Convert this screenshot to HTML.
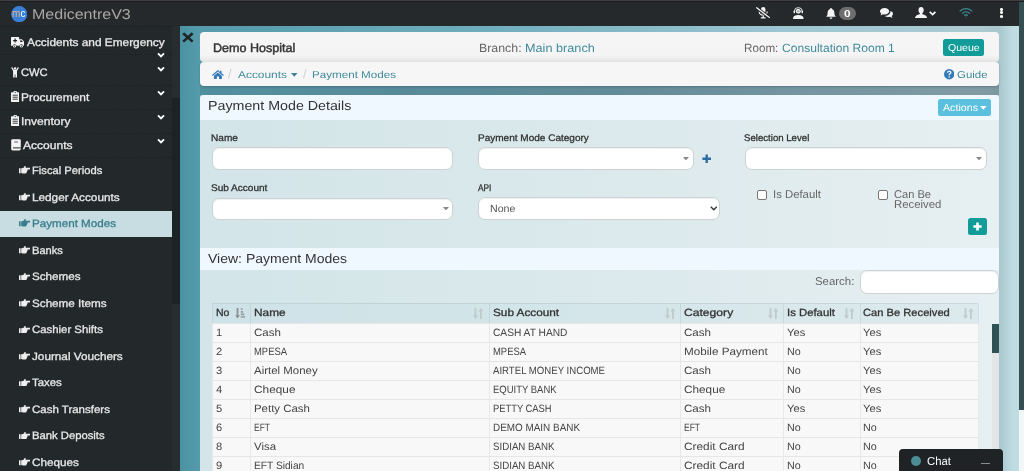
<!DOCTYPE html>
<html><head><meta charset="utf-8"><title>MedicentreV3 - Payment Modes</title>
<style>
*{box-sizing:border-box;margin:0;padding:0}
html,body{width:1024px;height:471px;overflow:hidden}
body{font-family:"Liberation Sans",sans-serif;position:relative;background:#5a9eac;color:#333}
.a,.t,svg{position:absolute}
.t{white-space:nowrap;line-height:1;transform-origin:0 0;display:block;text-rendering:geometricPrecision}
#nav{left:0;top:0;width:1024px;height:25.5px;background:#25292c;border-top:1px solid #3f3f42;box-shadow:inset 0 1px 0 #1c1e20}
#side{left:0;top:25px;width:180px;height:446px;background:#23292b}
#strack{left:172px;top:26px;width:8px;height:445px;background:#272c2f}
#sthumb{left:172px;top:98px;width:8px;height:206px;background:#1b2325}
#main{left:180px;top:25.5px;width:839px;height:446px;background:linear-gradient(90deg,#4a92a2 0,#559bab 20px,#6fadbc 300px,#9cc5d1 600px,#adcbd3 800px,#a8c6cd 819px,#b4d1d8 826px,#c0dce3 833px)}
#ptrack{left:1019px;top:2px;width:5px;height:469px;background:#f3f6f6}
#pthumb{left:1019px;top:2px;width:5px;height:408px;background:#344f52}
.sep{left:0;width:172px;height:1px;background-image:linear-gradient(90deg,#171b1d 50%,transparent 50%);background-size:3px 1px}
#sel{left:0;top:211px;width:172px;height:26px;background:#c7dde2}
.card{background:#f5f5f5;border-radius:4px}
#card1{left:200px;top:32px;width:799px;height:30.2px;background:linear-gradient(#f5f5f5 0,#f5f5f5 76%,#ececec 90%,#e2e2e2 100%)}
#card2{left:200px;top:62.2px;width:799px;height:23.8px;background:#f6f6f6;box-shadow:0 1px 2px rgba(20,40,50,.25)}
.panel{left:200px;width:799px;background:linear-gradient(90deg,#d3e5e9 0,#d9e8eb 40%,#e1ecee 75%,#e6eff1 100%)}
.ph{left:200px;width:799px;background:#f0f8ff}
.inp{background:#fff;border:1px solid #cdd3d4;border-radius:7px;box-shadow:inset 0 1px 1px rgba(0,0,0,.06)}
.btn{border-radius:2px}
.cb{width:10px;height:10px;background:#fff;border:1px solid #767676;border-radius:2px}
.th{top:303.3px;height:19.8px;background:rgba(185,218,226,.22);border-top:1px solid rgba(150,170,175,.28)}
</style></head><body>
<div class="a" id="wrap" style="left:0;top:0;width:1024px;height:471px;will-change:transform">
<div id="nav" class="a"></div>
<div id="side" class="a"></div>
<div id="strack" class="a"></div>
<div id="sthumb" class="a"></div>
<div id="main" class="a"></div>
<div id="ptrack" class="a"></div>
<div id="pthumb" class="a"></div>
<div id="sel" class="a"></div>
<div class="a sep" style="top:26px"></div>
<div class="a sep" style="top:54px"></div>
<div class="a sep" style="top:84.5px"></div>
<div class="a sep" style="top:108.5px"></div>
<div class="a sep" style="top:133px"></div>
<div class="a sep" style="top:157px"></div>
<!-- cards -->
<div class="a" style="left:200px;top:84px;width:799px;height:10.5px;background:linear-gradient(90deg,rgba(50,70,80,.14) 0,rgba(50,70,80,.3) 25%,rgba(50,70,80,.4) 55%,rgba(50,70,80,.36) 100%)"></div>
<div id="card2" class="a card"></div>
<div id="card1" class="a card"></div>
<div class="a btn" style="left:943.3px;top:38.5px;width:41px;height:17px;background:#119c9a;border-radius:2.5px"></div>
<!-- panel 1 -->
<div class="a ph" style="top:94.5px;height:25.5px;border-radius:3px 3px 0 0"></div>
<div class="a panel" style="top:120px;height:127.5px"></div>
<div class="a btn" style="left:937.7px;top:99px;width:53.6px;height:17px;background:#5bc0de;border-radius:2.5px"></div>
<div class="a inp" style="left:212.4px;top:147.2px;width:241px;height:23px"></div>
<div class="a inp" style="left:478.2px;top:146.8px;width:216.3px;height:23px"></div>
<div class="a inp" style="left:745.2px;top:146.8px;width:241.6px;height:23px"></div>
<div class="a inp" style="left:212.4px;top:197.5px;width:241px;height:22px"></div>
<div class="a inp" style="left:478.2px;top:197.3px;width:242px;height:23px"></div>
<div class="a cb" style="left:757px;top:190.2px"></div>
<div class="a cb" style="left:878.2px;top:190.2px"></div>
<div class="a btn" style="left:968.3px;top:218px;width:18.8px;height:17.2px;background:#119c9a;border-radius:2.5px"></div>
<!-- panel 2 -->
<div class="a ph" style="top:247.5px;height:22.5px"></div>
<div class="a panel" style="top:270px;height:201px"></div>
<div class="a inp" style="left:859.5px;top:270.3px;width:139.5px;height:23.5px"></div>
<div class="a" style="left:991.5px;top:323.5px;width:7.5px;height:148px;background:#e3e6e6"></div>
<div class="a" style="left:991.5px;top:323.8px;width:7.5px;height:28.8px;background:#2f5054"></div>
<div class="a th" style="left:212px;width:766px"></div>
<div class="a" style="left:212px;top:323px;width:766px;height:148px;background:#f8f8f8"></div>
<div class="a" style="left:212px;top:323px;width:766px;height:1px;background:#e6e6e6"></div>
<div class="a" style="left:212px;top:342px;width:766px;height:1px;background:#e6e6e6"></div>
<div class="a" style="left:212px;top:361px;width:766px;height:1px;background:#e6e6e6"></div>
<div class="a" style="left:212px;top:380px;width:766px;height:1px;background:#e6e6e6"></div>
<div class="a" style="left:212px;top:399px;width:766px;height:1px;background:#e6e6e6"></div>
<div class="a" style="left:212px;top:418px;width:766px;height:1px;background:#e6e6e6"></div>
<div class="a" style="left:212px;top:437px;width:766px;height:1px;background:#e6e6e6"></div>
<div class="a" style="left:212px;top:456px;width:766px;height:1px;background:#e6e6e6"></div>
<div class="a" style="left:212px;top:304px;width:1px;height:19px;background:rgba(150,170,175,.22)"></div>
<div class="a" style="left:212px;top:323px;width:1px;height:148px;background:#e8e8e8"></div>
<div class="a" style="left:250px;top:304px;width:1px;height:19px;background:rgba(150,170,175,.22)"></div>
<div class="a" style="left:250px;top:323px;width:1px;height:148px;background:#e8e8e8"></div>
<div class="a" style="left:489px;top:304px;width:1px;height:19px;background:rgba(150,170,175,.22)"></div>
<div class="a" style="left:489px;top:323px;width:1px;height:148px;background:#e8e8e8"></div>
<div class="a" style="left:680px;top:304px;width:1px;height:19px;background:rgba(150,170,175,.22)"></div>
<div class="a" style="left:680px;top:323px;width:1px;height:148px;background:#e8e8e8"></div>
<div class="a" style="left:783px;top:304px;width:1px;height:19px;background:rgba(150,170,175,.22)"></div>
<div class="a" style="left:783px;top:323px;width:1px;height:148px;background:#e8e8e8"></div>
<div class="a" style="left:860px;top:304px;width:1px;height:19px;background:rgba(150,170,175,.22)"></div>
<div class="a" style="left:860px;top:323px;width:1px;height:148px;background:#e8e8e8"></div>
<div class="a" style="left:978px;top:304px;width:1px;height:19px;background:rgba(150,170,175,.22)"></div>
<div class="a" style="left:978px;top:323px;width:1px;height:148px;background:#e8e8e8"></div>
<!-- chat -->
<div class="a" style="left:899.3px;top:449.2px;width:103.4px;height:24px;background:#1f2326;border-radius:4px 4px 0 0"></div>
<div class="a" style="left:911px;top:455.8px;width:9.8px;height:9.8px;border-radius:50%;background:#4b8c95"></div>
<div class="a" style="left:980.5px;top:462.8px;width:9.5px;height:1.4px;background:#8a8d8f"></div>
<svg style="left:11.00px;top:6.10px" width="16.40" height="16.40" viewBox="0 0 164 164" ><circle cx="82" cy="82" r="81" fill="#3a80d6"/><text x="11" y="107" font-family="Liberation Sans,sans-serif" font-size="104" fill="#e3b68c" textLength="134" lengthAdjust="spacingAndGlyphs">m<tspan fill="#fff">c</tspan></text></svg>
<svg style="left:10.85px;top:36.60px" width="13.60" height="11.20" viewBox="0 0 136 112" ><path fill="#f4f4f4" d="M8 0h66a8 8 0 0 1 8 8v14h26l28 28v38H0V8a8 8 0 0 1 8-8z"/><circle cx="36" cy="92" r="19" fill="#23292b"/><circle cx="104" cy="92" r="19" fill="#23292b"/><circle cx="36" cy="92" r="14" fill="#f4f4f4"/><circle cx="104" cy="92" r="14" fill="#f4f4f4"/><circle cx="36" cy="92" r="6" fill="#23292b"/><circle cx="104" cy="92" r="6" fill="#23292b"/><path d="M92 32h12l16 18H92z" fill="#23292b"/><path d="M35 16h12v14h14v12H47v14H35V42H21V30h14z" fill="#23292b"/></svg>
<svg style="left:10.85px;top:67.40px" width="8.10" height="10.60" viewBox="0 0 81 106" ><circle cx="40.5" cy="15" r="13" fill="#f4f4f4"/><path fill="#f4f4f4" d="M2 8l9-7 19 29h21L70 1l9 7-19 32v66H44V74h-7v32H21V40z"/></svg>
<svg style="left:11.00px;top:91.40px" width="8.40" height="11.00" viewBox="0 0 84 110" ><path fill="#f4f4f4" d="M8 12h16a18 14 0 0 1 36 0h16a8 8 0 0 1 8 8v82a8 8 0 0 1-8 8H8a8 8 0 0 1-8-8V20a8 8 0 0 1 8-8z"/><circle cx="42" cy="14" r="6" fill="#23292b"/><path d="M16 42h52M16 62h52M16 82h52" stroke="#23292b" stroke-width="9"/></svg>
<svg style="left:11.00px;top:115.40px" width="8.40" height="11.00" viewBox="0 0 84 110" ><path fill="#f4f4f4" d="M8 12h16a18 14 0 0 1 36 0h16a8 8 0 0 1 8 8v82a8 8 0 0 1-8 8H8a8 8 0 0 1-8-8V20a8 8 0 0 1 8-8z"/><circle cx="42" cy="14" r="6" fill="#23292b"/><path d="M16 42h52M16 62h52M16 82h52" stroke="#23292b" stroke-width="9"/></svg>
<svg style="left:10.70px;top:139.20px" width="10.00" height="11.60" viewBox="0 0 100 116" ><rect x="2" y="2" width="96" height="112" rx="14" fill="#f4f4f4"/><path d="M20 84h78v10H20z" fill="#23292b"/><path d="M34 30h34" stroke="#23292b" stroke-width="8"/></svg>
<svg style="left:157.30px;top:52.00px" width="8.00" height="6.40" viewBox="0 0 80 64" ><path d="M10 14l30 30 30-30" fill="none" stroke="#fff" stroke-width="19" stroke-linecap="butt" stroke-linejoin="miter"/></svg>
<svg style="left:157.30px;top:66.00px" width="8.00" height="6.40" viewBox="0 0 80 64" ><path d="M10 14l30 30 30-30" fill="none" stroke="#fff" stroke-width="19" stroke-linecap="butt" stroke-linejoin="miter"/></svg>
<svg style="left:157.30px;top:90.00px" width="8.00" height="6.40" viewBox="0 0 80 64" ><path d="M10 14l30 30 30-30" fill="none" stroke="#fff" stroke-width="19" stroke-linecap="butt" stroke-linejoin="miter"/></svg>
<svg style="left:157.30px;top:113.90px" width="8.00" height="6.40" viewBox="0 0 80 64" ><path d="M10 14l30 30 30-30" fill="none" stroke="#fff" stroke-width="19" stroke-linecap="butt" stroke-linejoin="miter"/></svg>
<svg style="left:157.30px;top:138.20px" width="8.00" height="6.40" viewBox="0 0 80 64" ><path d="M10 14l30 30 30-30" fill="none" stroke="#fff" stroke-width="19" stroke-linecap="butt" stroke-linejoin="miter"/></svg>
<svg style="left:18.70px;top:166.40px" width="11.20" height="7.60" viewBox="0 0 112 76" ><path fill="#eeeeee" d="M0 22h16v50H0z"/><path fill="#eeeeee" d="M22 22l22-2C50 10 52 0 62 0c7 0 7 10 3 18h41c8 0 8 18 0 18H84c4 8 2 14-4 16 2 8-2 12-6 14 0 6-4 10-12 10H40c-8 0-12-4-18-6z"/></svg>
<svg style="left:18.70px;top:192.93px" width="11.20" height="7.60" viewBox="0 0 112 76" ><path fill="#eeeeee" d="M0 22h16v50H0z"/><path fill="#eeeeee" d="M22 22l22-2C50 10 52 0 62 0c7 0 7 10 3 18h41c8 0 8 18 0 18H84c4 8 2 14-4 16 2 8-2 12-6 14 0 6-4 10-12 10H40c-8 0-12-4-18-6z"/></svg>
<svg style="left:18.70px;top:219.46px" width="11.20" height="7.60" viewBox="0 0 112 76" ><path fill="#3a7e8c" d="M0 22h16v50H0z"/><path fill="#3a7e8c" d="M22 22l22-2C50 10 52 0 62 0c7 0 7 10 3 18h41c8 0 8 18 0 18H84c4 8 2 14-4 16 2 8-2 12-6 14 0 6-4 10-12 10H40c-8 0-12-4-18-6z"/></svg>
<svg style="left:18.70px;top:245.99px" width="11.20" height="7.60" viewBox="0 0 112 76" ><path fill="#eeeeee" d="M0 22h16v50H0z"/><path fill="#eeeeee" d="M22 22l22-2C50 10 52 0 62 0c7 0 7 10 3 18h41c8 0 8 18 0 18H84c4 8 2 14-4 16 2 8-2 12-6 14 0 6-4 10-12 10H40c-8 0-12-4-18-6z"/></svg>
<svg style="left:18.70px;top:272.52px" width="11.20" height="7.60" viewBox="0 0 112 76" ><path fill="#eeeeee" d="M0 22h16v50H0z"/><path fill="#eeeeee" d="M22 22l22-2C50 10 52 0 62 0c7 0 7 10 3 18h41c8 0 8 18 0 18H84c4 8 2 14-4 16 2 8-2 12-6 14 0 6-4 10-12 10H40c-8 0-12-4-18-6z"/></svg>
<svg style="left:18.70px;top:299.05px" width="11.20" height="7.60" viewBox="0 0 112 76" ><path fill="#eeeeee" d="M0 22h16v50H0z"/><path fill="#eeeeee" d="M22 22l22-2C50 10 52 0 62 0c7 0 7 10 3 18h41c8 0 8 18 0 18H84c4 8 2 14-4 16 2 8-2 12-6 14 0 6-4 10-12 10H40c-8 0-12-4-18-6z"/></svg>
<svg style="left:18.70px;top:325.58px" width="11.20" height="7.60" viewBox="0 0 112 76" ><path fill="#eeeeee" d="M0 22h16v50H0z"/><path fill="#eeeeee" d="M22 22l22-2C50 10 52 0 62 0c7 0 7 10 3 18h41c8 0 8 18 0 18H84c4 8 2 14-4 16 2 8-2 12-6 14 0 6-4 10-12 10H40c-8 0-12-4-18-6z"/></svg>
<svg style="left:18.70px;top:352.11px" width="11.20" height="7.60" viewBox="0 0 112 76" ><path fill="#eeeeee" d="M0 22h16v50H0z"/><path fill="#eeeeee" d="M22 22l22-2C50 10 52 0 62 0c7 0 7 10 3 18h41c8 0 8 18 0 18H84c4 8 2 14-4 16 2 8-2 12-6 14 0 6-4 10-12 10H40c-8 0-12-4-18-6z"/></svg>
<svg style="left:18.70px;top:378.64px" width="11.20" height="7.60" viewBox="0 0 112 76" ><path fill="#eeeeee" d="M0 22h16v50H0z"/><path fill="#eeeeee" d="M22 22l22-2C50 10 52 0 62 0c7 0 7 10 3 18h41c8 0 8 18 0 18H84c4 8 2 14-4 16 2 8-2 12-6 14 0 6-4 10-12 10H40c-8 0-12-4-18-6z"/></svg>
<svg style="left:18.70px;top:405.17px" width="11.20" height="7.60" viewBox="0 0 112 76" ><path fill="#eeeeee" d="M0 22h16v50H0z"/><path fill="#eeeeee" d="M22 22l22-2C50 10 52 0 62 0c7 0 7 10 3 18h41c8 0 8 18 0 18H84c4 8 2 14-4 16 2 8-2 12-6 14 0 6-4 10-12 10H40c-8 0-12-4-18-6z"/></svg>
<svg style="left:18.70px;top:431.70px" width="11.20" height="7.60" viewBox="0 0 112 76" ><path fill="#eeeeee" d="M0 22h16v50H0z"/><path fill="#eeeeee" d="M22 22l22-2C50 10 52 0 62 0c7 0 7 10 3 18h41c8 0 8 18 0 18H84c4 8 2 14-4 16 2 8-2 12-6 14 0 6-4 10-12 10H40c-8 0-12-4-18-6z"/></svg>
<svg style="left:18.70px;top:458.23px" width="11.20" height="7.60" viewBox="0 0 112 76" ><path fill="#eeeeee" d="M0 22h16v50H0z"/><path fill="#eeeeee" d="M22 22l22-2C50 10 52 0 62 0c7 0 7 10 3 18h41c8 0 8 18 0 18H84c4 8 2 14-4 16 2 8-2 12-6 14 0 6-4 10-12 10H40c-8 0-12-4-18-6z"/></svg>
<svg style="left:181.80px;top:32.10px" width="11.80" height="10.80" viewBox="0 0 118 104" ><path d="M12 10l94 84M106 10L12 94" stroke="#1f2426" stroke-width="26" fill="none"/></svg>
<svg style="left:212.20px;top:69.60px" width="11.80" height="9.40" viewBox="0 0 118 94" ><path fill="#337ab7" d="M59 0l22 19V8h14v23l23 20-7 8-52-45L7 59l-7-8z"/><path fill="#337ab7" d="M59 24l40 34v36H70V66H48v28H19V58z"/></svg>
<svg style="left:291.40px;top:73.00px" width="6.60" height="3.80" viewBox="0 0 66 38" ><path fill="#3d8296" d="M0 0h66L33 38z"/></svg>
<svg style="left:980.30px;top:105.80px" width="6.60" height="3.80" viewBox="0 0 66 38" ><path fill="#fff" d="M0 0h66L33 38z"/></svg>
<svg style="left:943.60px;top:69.40px" width="10.40" height="10.40" viewBox="0 0 104 104" ><circle cx="52" cy="52" r="52" fill="#337ab7"/><path d="M36 38c0-22 32-22 32-2 0 12-16 12-16 26" fill="none" stroke="#f5f5f5" stroke-width="14"/><circle cx="52" cy="80" r="8" fill="#f5f5f5"/></svg>
<svg style="left:756.20px;top:7.40px" width="14.00" height="11.50" viewBox="0 0 140 115" ><rect x="50" y="0" width="44" height="68" rx="22" fill="#f4f4f4"/><path d="M32 44c0 48 80 48 80 0" fill="none" stroke="#f4f4f4" stroke-width="11"/><path d="M72 84v20M48 108h48" stroke="#f4f4f4" stroke-width="13"/><path d="M2 4l136 104" stroke="#25292c" stroke-width="30"/><path d="M2 4l136 104" stroke="#f4f4f4" stroke-width="13"/></svg>
<svg style="left:793.40px;top:7.10px" width="10.60" height="12.00" viewBox="0 0 106 120" ><circle cx="53" cy="43" r="25" fill="#f4f4f4"/><path d="M14 50V42a39 36 0 0 1 78 0v8" fill="none" stroke="#f4f4f4" stroke-width="9"/><rect x="6" y="36" width="14" height="26" rx="5" fill="#f4f4f4"/><rect x="86" y="36" width="14" height="26" rx="5" fill="#f4f4f4"/><path d="M0 120c0-30 18-40 53-40s53 10 53 40z" fill="#f4f4f4"/><circle cx="53" cy="43" r="14" fill="#25292c" opacity=".3"/></svg>
<svg style="left:826.40px;top:7.60px" width="10.00" height="11.40" viewBox="0 0 100 114" ><path fill="#f4f4f4" d="M50 0a8 8 0 0 1 8 10c18 5 26 20 26 40 0 22 8 30 16 38H0c8-8 16-16 16-38 0-20 8-35 26-40a8 8 0 0 1 8-10z"/><path fill="#f4f4f4" d="M36 96h28a14 14 0 0 1-28 0z"/></svg>
<div class="a" style="left:838.8px;top:6.6px;width:17.2px;height:13.8px;border-radius:7px;background:#6e6e6e"></div>
<svg style="left:879.60px;top:8.40px" width="13.00" height="9.80" viewBox="0 0 130 98" ><path fill="#f4f4f4" d="M46 0c26 0 46 14 46 32S72 64 46 64c-6 0-12-1-17-2-7 6-16 9-25 10 5-5 8-10 9-17C5 49 0 41 0 32 0 14 20 0 46 0z"/><path fill="#f4f4f4" d="M104 30c15 4 26 15 26 28 0 9-5 17-13 23 1 7 4 12 9 17-9-1-18-4-25-10-5 1-11 2-17 2-14 0-26-4-34-11 32-2 56-20 54-49z"/></svg>
<svg style="left:915.00px;top:6.90px" width="12.20" height="11.00" viewBox="0 0 122 110" ><path fill="#f4f4f4" d="M61 0c16 0 26 12 26 30 0 14-6 26-14 32v8c10 6 44 10 49 40H0c5-30 39-34 49-40v-8c-8-6-14-18-14-32C35 12 45 0 61 0z"/></svg>
<svg style="left:929.00px;top:11.00px" width="7.20" height="4.80" viewBox="0 0 72 48" ><path d="M8 8l28 28L64 8" fill="none" stroke="#fff" stroke-width="17"/></svg>
<svg style="left:959.30px;top:8.40px" width="14.00" height="9.60" viewBox="0 0 140 96" ><path d="M6 34c36-36 92-36 128 0" fill="none" stroke="#3b8a90" stroke-width="12"/><path d="M30 56c22-22 58-22 80 0" fill="none" stroke="#3b8a90" stroke-width="12"/><path d="M52 76c10-10 26-10 36 0" fill="none" stroke="#3b8a90" stroke-width="12"/><circle cx="70" cy="90" r="6" fill="#3b8a90"/></svg>
<div class="a" style="left:1000px;top:7.7px;width:3.4px;height:3px;border-radius:50%;background:#fff"></div>
<div class="a" style="left:1000px;top:11.2px;width:3.4px;height:3px;border-radius:50%;background:#fff"></div>
<div class="a" style="left:1000px;top:14.7px;width:3.4px;height:3px;border-radius:50%;background:#fff"></div>
<svg style="left:702.20px;top:154.00px" width="9.40" height="9.40" viewBox="0 0 94 94" ><path d="M47 4v86M4 47h86" stroke="#2e6da4" stroke-width="24" fill="none"/></svg>
<svg style="left:973.20px;top:222.10px" width="9.00" height="9.00" viewBox="0 0 90 90" ><path d="M45 4v82M4 45h82" stroke="#fff" stroke-width="26" fill="none"/></svg>
<svg style="left:442.60px;top:206.80px" width="6.00" height="3.40" viewBox="0 0 60 34" ><path fill="#888" d="M0 0h60L30 34z"/></svg>
<svg style="left:682.60px;top:156.80px" width="6.00" height="3.40" viewBox="0 0 60 34" ><path fill="#888" d="M0 0h60L30 34z"/></svg>
<svg style="left:975.50px;top:156.80px" width="6.00" height="3.40" viewBox="0 0 60 34" ><path fill="#888" d="M0 0h60L30 34z"/></svg>
<svg style="left:709.60px;top:206.20px" width="7.60" height="5.00" viewBox="0 0 76 50" ><path d="M8 8l30 30L68 8" fill="none" stroke="#333" stroke-width="14"/></svg>
<svg style="left:473.00px;top:308.20px" width="10.40" height="11.00" viewBox="0 0 104 110" ><path fill="#bfcacb" d="M16 0h18v74h16L25 110 0 74h16z"/><path fill="#bfcacb" d="M70 110h18V36h16L79 0 54 36h16z"/></svg>
<svg style="left:665.00px;top:308.20px" width="10.40" height="11.00" viewBox="0 0 104 110" ><path fill="#bfcacb" d="M16 0h18v74h16L25 110 0 74h16z"/><path fill="#bfcacb" d="M70 110h18V36h16L79 0 54 36h16z"/></svg>
<svg style="left:767.60px;top:308.20px" width="10.40" height="11.00" viewBox="0 0 104 110" ><path fill="#bfcacb" d="M16 0h18v74h16L25 110 0 74h16z"/><path fill="#bfcacb" d="M70 110h18V36h16L79 0 54 36h16z"/></svg>
<svg style="left:844.00px;top:308.20px" width="10.40" height="11.00" viewBox="0 0 104 110" ><path fill="#bfcacb" d="M16 0h18v74h16L25 110 0 74h16z"/><path fill="#bfcacb" d="M70 110h18V36h16L79 0 54 36h16z"/></svg>
<svg style="left:963.30px;top:308.20px" width="10.40" height="11.00" viewBox="0 0 104 110" ><path fill="#bfcacb" d="M16 0h18v74h16L25 110 0 74h16z"/><path fill="#bfcacb" d="M70 110h18V36h16L79 0 54 36h16z"/></svg>
<svg style="left:235.00px;top:308.20px" width="10.40" height="10.60" viewBox="0 0 104 106" ><path fill="#8b9192" d="M16 0h18v72h16L25 106 0 72h16z"/><path d="M58 12h16M58 38h24M58 64h34M58 90h44" stroke="#979d9e" stroke-width="17"/></svg>
<span class="t" style="left:31.52px;top:8px;font-size:14.2px;color:#aaa6a2;transform:scaleX(1.1282)">MedicentreV3</span>
<span class="t" style="left:844.20px;top:10px;font-size:10px;font-weight:bold;color:#fff;transform:scaleX(1.1865)">0</span>
<span class="t" style="left:26.58px;top:38px;font-size:10.9px;-webkit-text-stroke:0.3px #e9e9e9;color:#e9e9e9;transform:scaleX(1.0886)">Accidents and Emergency</span>
<span class="t" style="left:21.18px;top:68px;font-size:10.9px;-webkit-text-stroke:0.3px #e9e9e9;color:#e9e9e9;transform:scaleX(1.0238)">CWC</span>
<span class="t" style="left:21.18px;top:93px;font-size:10.9px;-webkit-text-stroke:0.3px #e9e9e9;color:#e9e9e9;transform:scaleX(1.0942)">Procurement</span>
<span class="t" style="left:21.18px;top:117px;font-size:10.9px;-webkit-text-stroke:0.3px #e9e9e9;color:#e9e9e9;transform:scaleX(1.1058)">Inventory</span>
<span class="t" style="left:22.68px;top:141px;font-size:10.9px;-webkit-text-stroke:0.3px #e9e9e9;color:#e9e9e9;transform:scaleX(1.1058)">Accounts</span>
<span class="t" style="left:31.89px;top:166px;font-size:10.7px;-webkit-text-stroke:0.3px #e6e6e6;color:#e6e6e6;transform:scaleX(1.0462)">Fiscal Periods</span>
<span class="t" style="left:31.89px;top:193px;font-size:10.7px;-webkit-text-stroke:0.3px #e6e6e6;color:#e6e6e6;transform:scaleX(1.1005)">Ledger Accounts</span>
<span class="t" style="left:31.89px;top:219px;font-size:10.7px;-webkit-text-stroke:0.3px #3a7e8c;color:#3a7e8c;transform:scaleX(1.0880)">Payment Modes</span>
<span class="t" style="left:31.89px;top:246px;font-size:10.7px;-webkit-text-stroke:0.3px #e6e6e6;color:#e6e6e6;transform:scaleX(1.0373)">Banks</span>
<span class="t" style="left:31.89px;top:272px;font-size:10.7px;-webkit-text-stroke:0.3px #e6e6e6;color:#e6e6e6;transform:scaleX(1.0912)">Schemes</span>
<span class="t" style="left:31.89px;top:299px;font-size:10.7px;-webkit-text-stroke:0.3px #e6e6e6;color:#e6e6e6;transform:scaleX(1.0925)">Scheme Items</span>
<span class="t" style="left:31.89px;top:325px;font-size:10.7px;-webkit-text-stroke:0.3px #e6e6e6;color:#e6e6e6;transform:scaleX(1.0646)">Cashier Shifts</span>
<span class="t" style="left:31.89px;top:352px;font-size:10.7px;-webkit-text-stroke:0.3px #e6e6e6;color:#e6e6e6;transform:scaleX(1.0985)">Journal Vouchers</span>
<span class="t" style="left:31.89px;top:378px;font-size:10.7px;-webkit-text-stroke:0.3px #e6e6e6;color:#e6e6e6;transform:scaleX(1.0683)">Taxes</span>
<span class="t" style="left:31.89px;top:405px;font-size:10.7px;-webkit-text-stroke:0.3px #e6e6e6;color:#e6e6e6;transform:scaleX(1.0753)">Cash Transfers</span>
<span class="t" style="left:31.89px;top:431px;font-size:10.7px;-webkit-text-stroke:0.3px #e6e6e6;color:#e6e6e6;transform:scaleX(1.0538)">Bank Deposits</span>
<span class="t" style="left:31.89px;top:458px;font-size:10.7px;-webkit-text-stroke:0.3px #e6e6e6;color:#e6e6e6;transform:scaleX(1.0942)">Cheques</span>
<span class="t" style="left:213.35px;top:42px;font-size:12.3px;-webkit-text-stroke:0.45px #333;color:#333;transform:scaleX(1.0190)">Demo Hospital</span>
<span class="t" style="left:478.56px;top:43px;font-size:11.9px;color:#666;transform:scaleX(1.0388)">Branch:</span>
<span class="t" style="left:524.66px;top:43px;font-size:11.9px;color:#3f8a9c;transform:scaleX(1.0663)">Main branch</span>
<span class="t" style="left:744.06px;top:43px;font-size:11.9px;color:#666;transform:scaleX(0.9813)">Room:</span>
<span class="t" style="left:782.46px;top:43px;font-size:11.9px;color:#3f8a9c;transform:scaleX(1.0156)">Consultation Room 1</span>
<span class="t" style="left:947.80px;top:44px;font-size:10px;color:#fff;transform:scaleX(1.0556)">Queue</span>
<span class="t" style="left:227.95px;top:68px;font-size:12.5px;color:#cfcfcf;transform:scaleX(1.0332)">/</span>
<span class="t" style="left:238.20px;top:71px;font-size:10px;color:#3f8a9c;transform:scaleX(1.1910)">Accounts</span>
<span class="t" style="left:302.75px;top:68px;font-size:12.5px;color:#cfcfcf;transform:scaleX(1.0332)">/</span>
<span class="t" style="left:312.40px;top:71px;font-size:10px;color:#3f8a9c;transform:scaleX(1.1624)">Payment Modes</span>
<span class="t" style="left:956.70px;top:71px;font-size:10px;color:#3f8a9c;transform:scaleX(1.1429)">Guide</span>
<span class="t" style="left:207.84px;top:99px;font-size:13.1px;color:#333;transform:scaleX(1.0880)">Payment Mode Details</span>
<span class="t" style="left:942.70px;top:104px;font-size:10.2px;color:#fff;transform:scaleX(1.0475)">Actions</span>
<span class="t" style="left:211.41px;top:134px;font-size:9.6px;-webkit-text-stroke:0.3px #333;color:#333;transform:scaleX(1.0504)">Name</span>
<span class="t" style="left:478.01px;top:134px;font-size:9.6px;-webkit-text-stroke:0.3px #333;color:#333;transform:scaleX(1.0448)">Payment Mode Category</span>
<span class="t" style="left:744.41px;top:134px;font-size:9.6px;-webkit-text-stroke:0.3px #333;color:#333;transform:scaleX(1.0032)">Selection Level</span>
<span class="t" style="left:211.41px;top:184px;font-size:9.6px;-webkit-text-stroke:0.3px #333;color:#333;transform:scaleX(1.0466)">Sub Account</span>
<span class="t" style="left:478.01px;top:184px;font-size:9.6px;-webkit-text-stroke:0.3px #333;color:#333;transform:scaleX(0.8652)">API</span>
<span class="t" style="left:489.59px;top:205px;font-size:10.4px;color:#555;transform:scaleX(1.0190)">None</span>
<span class="t" style="left:772.77px;top:190px;font-size:11.3px;color:#666;transform:scaleX(1.0025)">Is Default</span>
<span class="t" style="left:893.97px;top:190px;font-size:11.3px;color:#666;transform:scaleX(0.9831)">Can Be</span>
<span class="t" style="left:893.97px;top:200px;font-size:11.3px;color:#666;transform:scaleX(1.0052)">Received</span>
<span class="t" style="left:208.04px;top:252px;font-size:13.1px;color:#333;transform:scaleX(1.0699)">View: Payment Modes</span>
<span class="t" style="left:815.37px;top:277px;font-size:11.3px;color:#666;transform:scaleX(1.0106)">Search:</span>
<span class="t" style="left:215.79px;top:309px;font-size:10.4px;-webkit-text-stroke:0.3px #333;color:#333;transform:scaleX(1.0090)">No</span>
<span class="t" style="left:254.49px;top:309px;font-size:10.4px;-webkit-text-stroke:0.3px #333;color:#333;transform:scaleX(1.1406)">Name</span>
<span class="t" style="left:492.79px;top:309px;font-size:10.4px;-webkit-text-stroke:0.3px #333;color:#333;transform:scaleX(1.1329)">Sub Account</span>
<span class="t" style="left:684.49px;top:309px;font-size:10.4px;-webkit-text-stroke:0.3px #333;color:#333;transform:scaleX(1.1670)">Category</span>
<span class="t" style="left:787.49px;top:309px;font-size:10.4px;-webkit-text-stroke:0.3px #333;color:#333;transform:scaleX(1.0913)">Is Default</span>
<span class="t" style="left:863.49px;top:309px;font-size:10.4px;-webkit-text-stroke:0.3px #333;color:#333;transform:scaleX(1.0735)">Can Be Received</span>
<span class="t" style="left:215.79px;top:328px;font-size:10.6px;color:#444;transform:scaleX(1.0500)">1</span>
<span class="t" style="left:254.49px;top:328px;font-size:10.6px;color:#444;transform:scaleX(1.0885)">Cash</span>
<span class="t" style="left:492.79px;top:328px;font-size:10.6px;color:#444;transform:scaleX(0.9626)">CASH AT HAND</span>
<span class="t" style="left:684.49px;top:328px;font-size:10.6px;color:#444;transform:scaleX(1.0926)">Cash</span>
<span class="t" style="left:787.49px;top:328px;font-size:10.6px;color:#444;transform:scaleX(1.0536)">Yes</span>
<span class="t" style="left:863.49px;top:328px;font-size:10.6px;color:#444;transform:scaleX(1.0536)">Yes</span>
<span class="t" style="left:215.79px;top:347px;font-size:10.6px;color:#444;transform:scaleX(1.0500)">2</span>
<span class="t" style="left:254.49px;top:347px;font-size:10.6px;color:#444;transform:scaleX(0.8903)">MPESA</span>
<span class="t" style="left:492.79px;top:347px;font-size:10.6px;color:#444;transform:scaleX(0.8903)">MPESA</span>
<span class="t" style="left:684.49px;top:347px;font-size:10.6px;color:#444;transform:scaleX(1.1021)">Mobile Payment</span>
<span class="t" style="left:787.49px;top:347px;font-size:10.6px;color:#444;transform:scaleX(1.0131)">No</span>
<span class="t" style="left:863.49px;top:347px;font-size:10.6px;color:#444;transform:scaleX(1.0536)">Yes</span>
<span class="t" style="left:215.79px;top:366px;font-size:10.6px;color:#444;transform:scaleX(1.0500)">3</span>
<span class="t" style="left:254.49px;top:366px;font-size:10.6px;color:#444;transform:scaleX(1.0804)">Airtel Money</span>
<span class="t" style="left:492.79px;top:366px;font-size:10.6px;color:#444;transform:scaleX(0.9077)">AIRTEL MONEY INCOME</span>
<span class="t" style="left:684.49px;top:366px;font-size:10.6px;color:#444;transform:scaleX(1.0926)">Cash</span>
<span class="t" style="left:787.49px;top:366px;font-size:10.6px;color:#444;transform:scaleX(1.0131)">No</span>
<span class="t" style="left:863.49px;top:366px;font-size:10.6px;color:#444;transform:scaleX(1.0536)">Yes</span>
<span class="t" style="left:215.79px;top:385px;font-size:10.6px;color:#444;transform:scaleX(1.0500)">4</span>
<span class="t" style="left:254.49px;top:385px;font-size:10.6px;color:#444;transform:scaleX(1.1190)">Cheque</span>
<span class="t" style="left:492.79px;top:385px;font-size:10.6px;color:#444;transform:scaleX(0.8955)">EQUITY BANK</span>
<span class="t" style="left:684.49px;top:385px;font-size:10.6px;color:#444;transform:scaleX(1.1109)">Cheque</span>
<span class="t" style="left:787.49px;top:385px;font-size:10.6px;color:#444;transform:scaleX(1.0131)">No</span>
<span class="t" style="left:863.49px;top:385px;font-size:10.6px;color:#444;transform:scaleX(1.0536)">Yes</span>
<span class="t" style="left:215.79px;top:404px;font-size:10.6px;color:#444;transform:scaleX(1.0500)">5</span>
<span class="t" style="left:254.49px;top:404px;font-size:10.6px;color:#444;transform:scaleX(1.0790)">Petty Cash</span>
<span class="t" style="left:492.79px;top:404px;font-size:10.6px;color:#444;transform:scaleX(0.8838)">PETTY CASH</span>
<span class="t" style="left:684.49px;top:404px;font-size:10.6px;color:#444;transform:scaleX(1.0926)">Cash</span>
<span class="t" style="left:787.49px;top:404px;font-size:10.6px;color:#444;transform:scaleX(1.0536)">Yes</span>
<span class="t" style="left:863.49px;top:404px;font-size:10.6px;color:#444;transform:scaleX(1.0536)">Yes</span>
<span class="t" style="left:215.79px;top:423px;font-size:10.6px;color:#444;transform:scaleX(1.0500)">6</span>
<span class="t" style="left:254.49px;top:423px;font-size:10.6px;color:#444;transform:scaleX(0.8006)">EFT</span>
<span class="t" style="left:492.79px;top:423px;font-size:10.6px;color:#444;transform:scaleX(0.9356)">DEMO MAIN BANK</span>
<span class="t" style="left:684.49px;top:423px;font-size:10.6px;color:#444;transform:scaleX(0.8006)">EFT</span>
<span class="t" style="left:787.49px;top:423px;font-size:10.6px;color:#444;transform:scaleX(1.0131)">No</span>
<span class="t" style="left:863.49px;top:423px;font-size:10.6px;color:#444;transform:scaleX(1.0131)">No</span>
<span class="t" style="left:215.79px;top:442px;font-size:10.6px;color:#444;transform:scaleX(1.0500)">8</span>
<span class="t" style="left:254.49px;top:442px;font-size:10.6px;color:#444;transform:scaleX(1.0785)">Visa</span>
<span class="t" style="left:492.79px;top:442px;font-size:10.6px;color:#444;transform:scaleX(0.9166)">SIDIAN BANK</span>
<span class="t" style="left:684.49px;top:442px;font-size:10.6px;color:#444;transform:scaleX(1.1191)">Credit Card</span>
<span class="t" style="left:787.49px;top:442px;font-size:10.6px;color:#444;transform:scaleX(1.0131)">No</span>
<span class="t" style="left:863.49px;top:442px;font-size:10.6px;color:#444;transform:scaleX(1.0131)">No</span>
<span class="t" style="left:215.79px;top:461px;font-size:10.6px;color:#444;transform:scaleX(1.0500)">9</span>
<span class="t" style="left:254.49px;top:461px;font-size:10.6px;color:#444;transform:scaleX(0.9618)">EFT Sidian</span>
<span class="t" style="left:492.79px;top:461px;font-size:10.6px;color:#444;transform:scaleX(0.9166)">SIDIAN BANK</span>
<span class="t" style="left:684.49px;top:461px;font-size:10.6px;color:#444;transform:scaleX(1.1191)">Credit Card</span>
<span class="t" style="left:787.49px;top:461px;font-size:10.6px;color:#444;transform:scaleX(1.0131)">No</span>
<span class="t" style="left:863.49px;top:461px;font-size:10.6px;color:#444;transform:scaleX(1.0131)">No</span>
<span class="t" style="left:927.07px;top:456px;font-size:11.6px;color:#fff;transform:scaleX(0.9740)">Chat</span>
</div>
</body></html>
